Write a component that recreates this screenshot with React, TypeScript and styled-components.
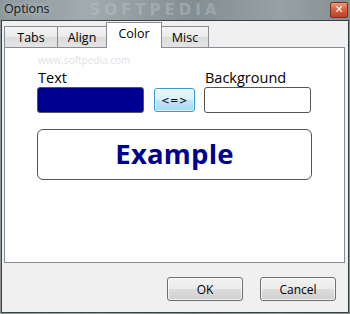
import React from "react";
import styled, { createGlobalStyle } from "styled-components";

const Global = createGlobalStyle`
  html, body { margin: 0; padding: 0; background: #ffffff; }
  body { font-family: "Open Sans", "Noto Sans", sans-serif; }
`;

const Window = styled.div`
  width: 350px;
  height: 314px;
  box-sizing: border-box;
  display: flex;
  flex-direction: column;
  background: linear-gradient(90deg, #8e989c 0%, #a2abae 25%, #838e92 55%, #98a1a4 80%, #858f92 100%);
  padding: 0 1px 1px 1px;
  overflow: hidden;
`;

const TitleBar = styled.div`
  height: 20px;
  display: flex;
  align-items: center;
  padding: 0 1px 0 3px;
`;

const Title = styled.span`
  font-family: "Open Sans", sans-serif;
  font-size: 12.5px;
  color: #141a20;
  letter-spacing: -0.1px;
  line-height: 1;
  margin-top: -2px;
  text-shadow: 0 0 6px rgba(255,255,255,0.5);
`;

const Watermark = styled.span`
  flex: 1;
  padding-left: 40px;
  font-family: "DejaVu Sans", sans-serif;
  font-weight: bold;
  font-size: 15px;
  line-height: 18px;
  letter-spacing: 4px;
  color: rgba(185, 195, 200, 0.45);
  pointer-events: none;
`;

const CloseButton = styled.div`
  flex: 0 0 18px;
  width: 18px;
  height: 16px;
  margin-top: -1px;
  box-sizing: border-box;
  border: 1px solid #7a2f20;
  border-radius: 2px;
  background: linear-gradient(180deg, #ec9a80 0%, #d9603e 45%, #c23f25 100%);
  color: #ffffff;
  font-family: "DejaVu Sans", sans-serif;
  font-weight: bold;
  font-size: 11px;
  line-height: 14px;
  text-align: center;
`;

const Client = styled.div`
  flex: 1;
  background: #f0f0f0;
  border: 1px solid #3c3f42;
  display: flex;
  flex-direction: column;
  padding: 1px 3px 0 2px;
  box-sizing: border-box;
`;

const TabStrip = styled.div`
  display: flex;
  align-items: flex-end;
  height: 26px;
  position: relative;
  z-index: 1;
  margin-bottom: -1px;
`;

const Tab = styled.div<{ $active?: boolean; $w: number }>`
  width: ${(p) => p.$w}px;
  height: ${(p) => (p.$active ? 26 : 22)}px;
  box-sizing: border-box;
  border: 1px solid #898c95;
  border-bottom: ${(p) => (p.$active ? "none" : "1px solid #898c95")};
  margin-left: -1px;
  background: ${(p) =>
    p.$active ? "#ffffff" : "linear-gradient(180deg, #f3f3f3 0%, #ebebeb 50%, #dcdcdc 51%, #e4e4e4 100%)"};
  font-size: 12.5px;
  color: #000;
  display: flex;
  align-items: flex-start;
  justify-content: center;
  padding-top: 2px;
  &:first-child { margin-left: 0; }
`;

const Panel = styled.div`
  width: 341px;
  height: 216px;
  box-sizing: border-box;
  background: #ffffff;
  border: 1px solid #898c95;
  padding: 5px 0 0 32px;
  display: flex;
  flex-direction: column;
`;

const SiteMark = styled.div`
  font-size: 10px;
  color: #e2e2e2;
  height: 14px;
  line-height: 14px;
  margin-left: 1px;
`;

const SwatchRow = styled.div`
  display: flex;
  align-items: flex-end;
  margin-top: 2px;
`;

const Field = styled.div`
  display: flex;
  flex-direction: column;
`;

const Label = styled.div`
  font-size: 14.5px;
  line-height: 18px;
  color: #000;
  margin-left: 1px;
`;

const Swatch = styled.div<{ $color: string }>`
  width: 107px;
  height: 26px;
  box-sizing: border-box;
  background: ${(p) => p.$color};
  border: 1px solid #555555;
  border-radius: 3px;
`;

const SwapButton = styled.div`
  width: 41px;
  height: 24px;
  box-sizing: border-box;
  margin: 0 9px 1px 10px;
  border: 1px solid #3c9ad4;
  border-radius: 3px;
  background: linear-gradient(180deg, #eaf6fd 0%, #d9f0fc 50%, #bee6fd 51%, #a7d9f5 100%);
  box-shadow: inset 0 0 0 1px rgba(255,255,255,0.6);
  font-family: "DejaVu Sans", sans-serif;
  font-size: 10px;
  letter-spacing: 0.5px;
  display: flex;
  align-items: center;
  justify-content: center;
  color: #000;
`;

const ExampleBox = styled.div`
  width: 275px;
  height: 51px;
  box-sizing: border-box;
  margin-top: 16px;
  border: 1px solid #555555;
  border-radius: 6px;
  display: flex;
  align-items: center;
  justify-content: center;
  font-weight: 700;
  font-size: 27.5px;
  color: #000090;
  padding-bottom: 2px;
  letter-spacing: 0.2px;
`;

const Footer = styled.div`
  flex: 1;
  display: flex;
  justify-content: flex-end;
  align-items: flex-start;
  gap: 17px;
  padding: 14px 9px 0 0;
`;

const DialogButton = styled.div`
  width: 76px;
  height: 24px;
  box-sizing: border-box;
  border: 1px solid #707070;
  border-radius: 3px;
  background: linear-gradient(180deg, #f2f2f2 0%, #ebebeb 50%, #dddddd 51%, #cfcfcf 100%);
  box-shadow: inset 0 0 0 1px rgba(255,255,255,0.7);
  font-size: 12px;
  display: flex;
  align-items: center;
  justify-content: center;
  color: #000;
`;

export default function App() {
  return (
    <>
      <Global />
      <Window>
        <TitleBar>
          <Title>Options</Title>
          <Watermark>SOFTPEDIA</Watermark>
          <CloseButton>✕</CloseButton>
        </TitleBar>
        <Client>
          <TabStrip>
            <Tab $w={54}>Tabs</Tab>
            <Tab $w={50}>Align</Tab>
            <Tab $w={56} $active>Color</Tab>
            <Tab $w={48}>Misc</Tab>
          </TabStrip>
          <Panel>
            <SiteMark>www.softpedia.com</SiteMark>
            <SwatchRow>
              <Field>
                <Label>Text</Label>
                <Swatch $color="#000090" />
              </Field>
              <SwapButton>&lt;=&gt;</SwapButton>
              <Field>
                <Label>Background</Label>
                <Swatch $color="#ffffff" />
              </Field>
            </SwatchRow>
            <ExampleBox>Example</ExampleBox>
          </Panel>
          <Footer>
            <DialogButton>OK</DialogButton>
            <DialogButton>Cancel</DialogButton>
          </Footer>
        </Client>
      </Window>
    </>
  );
}
